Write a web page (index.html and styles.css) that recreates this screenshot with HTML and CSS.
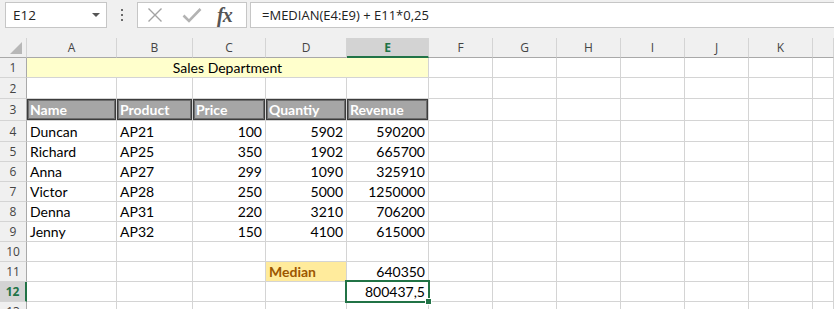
FILE: index.html
```html
<!DOCTYPE html>
<html lang="en">
<head>
    <meta charset="UTF-8">
    <title>Sales Department</title>
    <link rel="stylesheet" href="styles.css">
</head>
<body>
    <div class="bar">
        <div class="namebox">
            <span>E12</span>
            <span class="caret"></span>
        </div>
        <div class="dots"><i></i><i></i><i></i></div>
        <div class="fxbox">
            <svg class="ico" width="16" height="16" viewBox="0 0 16 16">
                <path d="M1.5 1.5 L14.5 14.5 M14.5 1.5 L1.5 14.5" stroke="#a3a3a3" stroke-width="1.4" fill="none"/>
            </svg>
            <svg class="ico" width="20" height="16" viewBox="0 0 20 16">
                <path d="M1.5 8.5 L7 14 L18.5 2" stroke="#b3b3b3" stroke-width="2.6" fill="none"/>
            </svg>
            <span class="fx">fx</span>
        </div>
        <div class="formula">=MEDIAN(E4:E9) + E11*0,25</div>
    </div>

    <div class="sheet">
        <!-- column headers -->
        <div class="hd corner"><span class="tri"></span></div>
        <div class="hd col">A</div>
        <div class="hd col">B</div>
        <div class="hd col">C</div>
        <div class="hd col">D</div>
        <div class="hd col sel">E</div>
        <div class="hd col">F</div>
        <div class="hd col">G</div>
        <div class="hd col">H</div>
        <div class="hd col">I</div>
        <div class="hd col">J</div>
        <div class="hd col">K</div>
        <div class="hd col"></div>

        <!-- 1 -->
        <div class="hd row">1</div>
        <div class="c title">Sales Department</div>
        <div class="c"></div><div class="c"></div><div class="c"></div><div class="c"></div>
        <div class="c"></div><div class="c"></div><div class="c"></div>

        <!-- 2 -->
        <div class="hd row">2</div>
        <div class="c"></div><div class="c"></div><div class="c"></div><div class="c"></div><div class="c"></div>
        <div class="c"></div><div class="c"></div><div class="c"></div><div class="c"></div><div class="c"></div>
        <div class="c"></div><div class="c"></div>

        <!-- 3 -->
        <div class="hd row">3</div>
        <div class="c th">Name</div>
        <div class="c th">Product</div>
        <div class="c th">Price</div>
        <div class="c th">Quantiy</div>
        <div class="c th">Revenue</div>
        <div class="c"></div><div class="c"></div><div class="c"></div><div class="c"></div><div class="c"></div>
        <div class="c"></div><div class="c"></div>

        <!-- 4 -->
        <div class="hd row">4</div>
        <div class="c">Duncan</div><div class="c">AP21</div><div class="c num">100</div><div class="c num">5902</div><div class="c num">590200</div>
        <div class="c"></div><div class="c"></div><div class="c"></div><div class="c"></div><div class="c"></div>
        <div class="c"></div><div class="c"></div>

        <!-- 5 -->
        <div class="hd row">5</div>
        <div class="c">Richard</div><div class="c">AP25</div><div class="c num">350</div><div class="c num">1902</div><div class="c num">665700</div>
        <div class="c"></div><div class="c"></div><div class="c"></div><div class="c"></div><div class="c"></div>
        <div class="c"></div><div class="c"></div>

        <!-- 6 -->
        <div class="hd row">6</div>
        <div class="c">Anna</div><div class="c">AP27</div><div class="c num">299</div><div class="c num">1090</div><div class="c num">325910</div>
        <div class="c"></div><div class="c"></div><div class="c"></div><div class="c"></div><div class="c"></div>
        <div class="c"></div><div class="c"></div>

        <!-- 7 -->
        <div class="hd row">7</div>
        <div class="c">Victor</div><div class="c">AP28</div><div class="c num">250</div><div class="c num">5000</div><div class="c num">1250000</div>
        <div class="c"></div><div class="c"></div><div class="c"></div><div class="c"></div><div class="c"></div>
        <div class="c"></div><div class="c"></div>

        <!-- 8 -->
        <div class="hd row">8</div>
        <div class="c">Denna</div><div class="c">AP31</div><div class="c num">220</div><div class="c num">3210</div><div class="c num">706200</div>
        <div class="c"></div><div class="c"></div><div class="c"></div><div class="c"></div><div class="c"></div>
        <div class="c"></div><div class="c"></div>

        <!-- 9 -->
        <div class="hd row">9</div>
        <div class="c">Jenny</div><div class="c">AP32</div><div class="c num">150</div><div class="c num">4100</div><div class="c num">615000</div>
        <div class="c"></div><div class="c"></div><div class="c"></div><div class="c"></div><div class="c"></div>
        <div class="c"></div><div class="c"></div>

        <!-- 10 -->
        <div class="hd row">10</div>
        <div class="c"></div><div class="c"></div><div class="c"></div><div class="c"></div><div class="c"></div>
        <div class="c"></div><div class="c"></div><div class="c"></div><div class="c"></div><div class="c"></div>
        <div class="c"></div><div class="c"></div>

        <!-- 11 -->
        <div class="hd row">11</div>
        <div class="c"></div><div class="c"></div><div class="c"></div>
        <div class="c neutral">Median</div><div class="c num">640350</div>
        <div class="c"></div><div class="c"></div><div class="c"></div><div class="c"></div><div class="c"></div>
        <div class="c"></div><div class="c"></div>

        <!-- 12 -->
        <div class="hd row sel">12</div>
        <div class="c"></div><div class="c"></div><div class="c"></div><div class="c"></div>
        <div class="c num active">800437,5<span class="handle"></span></div>
        <div class="c"></div><div class="c"></div><div class="c"></div><div class="c"></div><div class="c"></div>
        <div class="c"></div><div class="c"></div>

        <!-- 13 -->
        <div class="hd row">13</div>
        <div class="c"></div><div class="c"></div><div class="c"></div><div class="c"></div><div class="c"></div>
        <div class="c"></div><div class="c"></div><div class="c"></div><div class="c"></div><div class="c"></div>
        <div class="c"></div><div class="c"></div>
    </div>
</body>
</html>
```

FILE: styles.css
```css
body {
    margin: 0;
    background-color: #f0f0f0;
    font-family: 'Lato', 'Liberation Sans', sans-serif;
    overflow: hidden;
}

/* formula bar */
.bar {
    height: 38px;
    display: flex;
    align-items: flex-start;
    padding-top: 2px;
    box-sizing: border-box;
    font-family: 'Open Sans', 'Noto Sans', sans-serif;
    color: #222;
}

.namebox {
    margin-left: 5px;
    width: 102px;
    height: 26px;
    box-sizing: border-box;
    background: #fff;
    border: 1px solid #c6c6c6;
    display: flex;
    align-items: center;
    justify-content: space-between;
    padding: 0 6px 0 7px;
    font-size: 13.5px;
}

.caret {
    width: 0;
    height: 0;
    border-left: 4px solid transparent;
    border-right: 4px solid transparent;
    border-top: 4px solid #555;
}

.dots {
    width: 30px;
    height: 26px;
    display: flex;
    flex-direction: column;
    align-items: center;
    justify-content: center;
    gap: 3px;
}

.dots i {
    width: 2px;
    height: 2px;
    background: #6a6a6a;
}

.fxbox {
    width: 110px;
    height: 26px;
    box-sizing: border-box;
    background: #fff;
    border: 1px solid #c6c6c6;
    display: flex;
    align-items: center;
    padding-left: 9px;
}

.fxbox .ico:first-child {
    margin-right: 19px;
}

.fxbox .fx {
    margin-left: 15px;
    font-family: 'Liberation Serif', serif;
    font-style: italic;
    font-weight: bold;
    font-size: 20px;
    color: #555;
    letter-spacing: -1px;
    line-height: 20px;
}

.formula {
    margin-left: 3px;
    flex: 1;
    height: 26px;
    box-sizing: border-box;
    background: #fff;
    border: 1px solid #c6c6c6;
    border-right: none;
    padding-left: 11px;
    display: flex;
    align-items: center;
    font-size: 13px;
}

/* grid */
.sheet {
    display: grid;
    grid-template-columns: 27px 90px 76px 73px 81px 82px repeat(6, 64px) 1fr;
    grid-template-rows: 20px 20px 21px 22px 21px repeat(9, 20px);
    background: #fff;
}

.hd {
    background: #f0f0f0;
    color: #444;
    font-family: 'Open Sans', 'Noto Sans', sans-serif;
    font-size: 12px;
    box-sizing: border-box;
    display: flex;
    align-items: center;
    justify-content: center;
}

.hd.col {
    border-right: 1px solid #d4d4d4;
    border-bottom: 1px solid #a9a9a9;
}

.hd.row {
    border-right: 1px solid #a9a9a9;
    border-bottom: 1px solid #d4d4d4;
}

.hd.corner {
    border-right: 1px solid #d4d4d4;
    border-bottom: 1px solid #a9a9a9;
    position: relative;
}

.tri {
    position: absolute;
    right: 4px;
    bottom: 3px;
    width: 12px;
    height: 12px;
    background: #b7b7b7;
    clip-path: polygon(100% 0, 100% 100%, 0 100%);
}

.hd.col.sel {
    background: #d3d3d3;
    color: #217346;
    font-weight: bold;
    border-bottom: 2px solid #217346;
}

.hd.row.sel {
    background: #d3d3d3;
    color: #217346;
    font-weight: bold;
    border-right: 2px solid #217346;
}

.c {
    box-sizing: border-box;
    border-right: 1px solid #d4d4d4;
    border-bottom: 1px solid #d4d4d4;
    font-size: 14px;
    line-height: 17px;
    padding: 0 3px 1px;
    display: flex;
    align-items: flex-end;
    white-space: nowrap;
    color: #000;
}

.c.num {
    justify-content: flex-end;
}

.c.title {
    grid-column: span 5;
    background: #ffffcc;
    justify-content: center;
}

.c.th {
    background: #a6a6a6;
    color: #fff;
    font-weight: bold;
    box-shadow: inset 0 0 0 1px #3c3c3c, inset 0 0 0 2px #6e6e6e;
    padding-bottom: 2px;
}

.c.neutral {
    background: #ffeb9c;
    color: #9c5700;
    font-weight: bold;
}

.c.active {
    position: relative;
}

.c.active::after {
    content: '';
    position: absolute;
    left: -2px;
    top: -2px;
    right: -2px;
    bottom: -2px;
    border: 2px solid #217346;
}

.handle {
    position: absolute;
    right: -4px;
    bottom: -4px;
    width: 5px;
    height: 5px;
    background: #217346;
    border: 1px solid #fff;
    z-index: 2;
}
```
